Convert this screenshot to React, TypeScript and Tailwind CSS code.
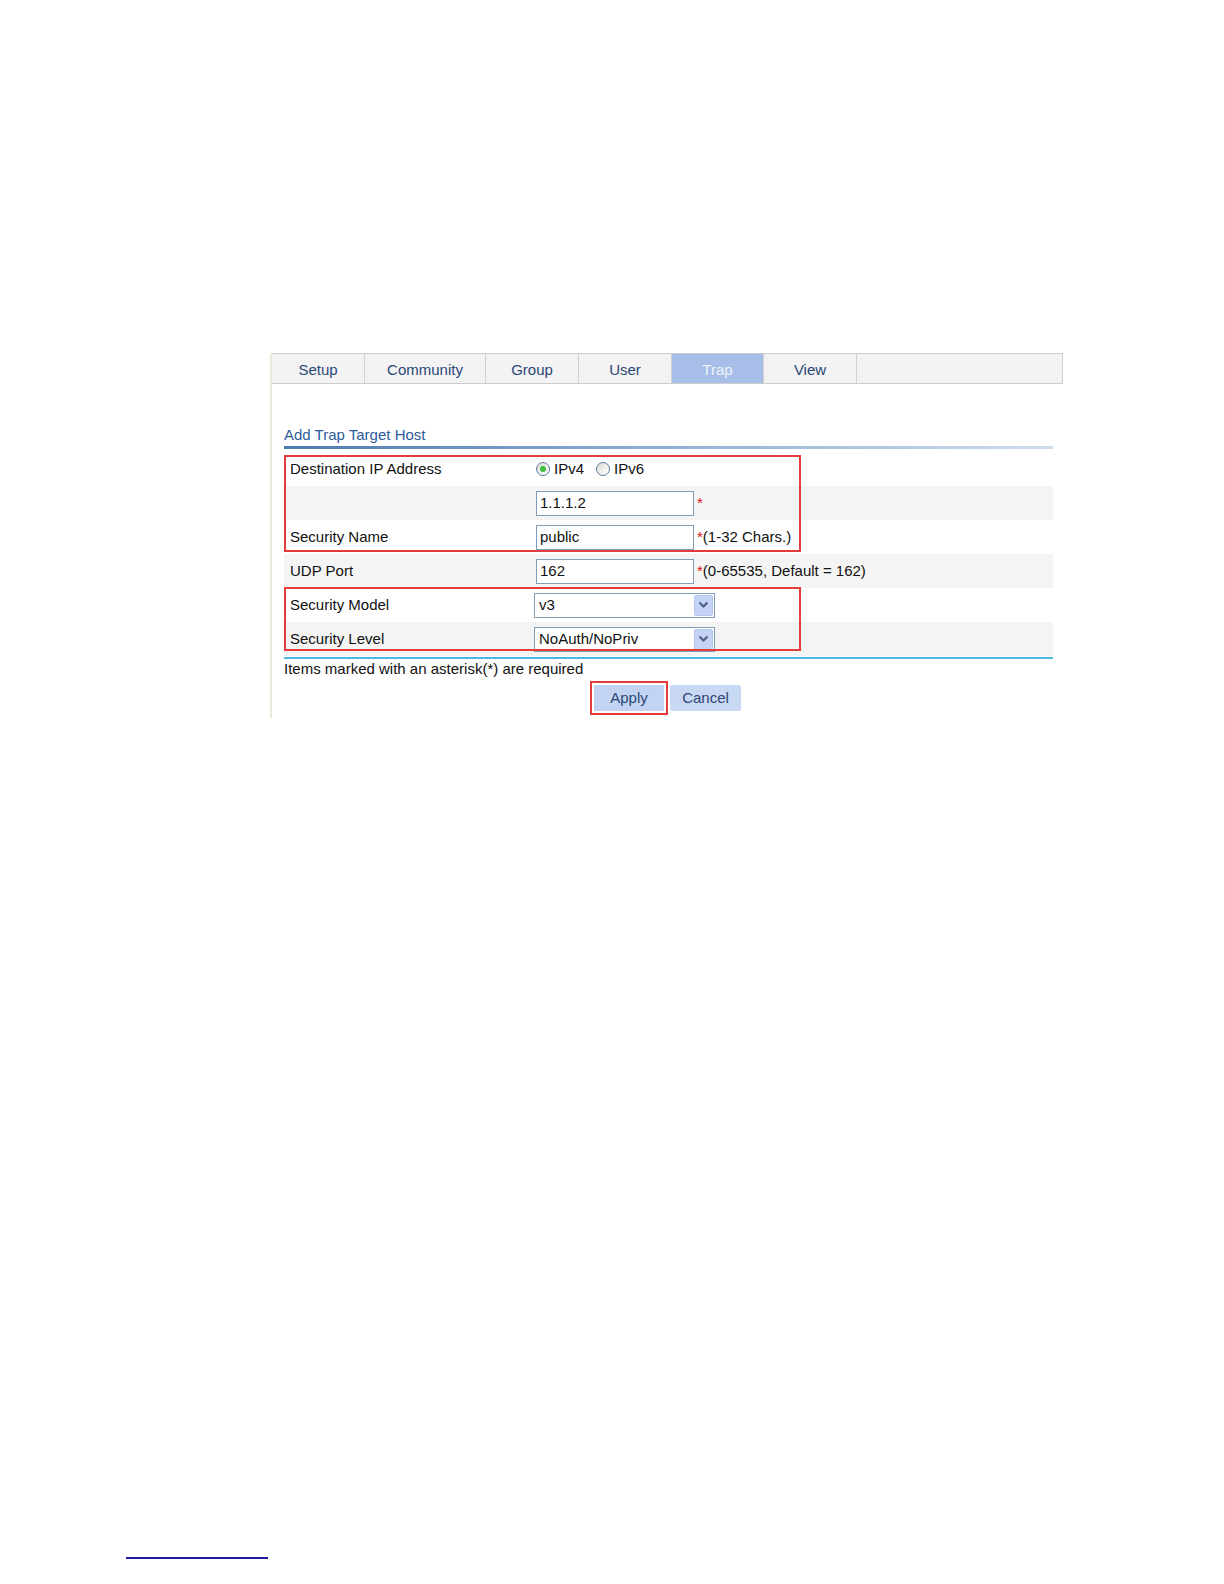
import { type ReactNode } from "react";

const tabs = ["Setup", "Community", "Group", "User", "Trap", "View"];
const tabWidths = ["w-[93px]", "w-[121px]", "w-[93px]", "w-[93px]", "w-[92px]", "w-[93px]"];

const Row = ({ label, shaded, children }: { label?: string; shaded?: boolean; children: ReactNode }) => (
  <div className={`flex h-[34px] items-center ${shaded ? "bg-[#f4f4f4]" : "bg-white"}`}>
    <div className="w-[252px] pl-[6px] text-[15px] text-[#111]">{label}</div>
    <div className="flex items-center">{children}</div>
  </div>
);

const TextBox = ({ value }: { value: string }) => (
  <div className="w-[158px] h-[25px] border border-[#7f9db9] bg-white pl-[3px] flex items-center text-[15px] text-[#111]">
    {value}
  </div>
);

const Select = ({ value }: { value: string }) => (
  <div className="w-[181px] h-[25px] border border-[#7f9db9] bg-white flex items-center justify-between pl-[4px] pr-[1px] text-[15px] text-[#111]">
    <span>{value}</span>
    <span className="w-[19px] h-[21px] rounded-[2px] bg-[#c5d4f6] border border-[#b4c6ee] flex items-center justify-center">
      <svg width="11" height="8" viewBox="0 0 11 8">
        <path d="M1.5 1.5 L5.5 5.5 L9.5 1.5" fill="none" stroke="#4d6185" strokeWidth="2.2" />
      </svg>
    </span>
  </div>
);

const Radio = ({ checked, label }: { checked?: boolean; label: string }) => (
  <span className="flex items-center mr-[12px]">
    <span className="w-[14px] h-[14px] rounded-full border border-[#5a7aa4] bg-gradient-to-br from-[#dcdcd4] to-white flex items-center justify-center">
      {checked && <span className="w-[6px] h-[6px] rounded-full bg-[#3fbf3f]" />}
    </span>
    <span className="ml-[4px] text-[15px] text-[#111]">{label}</span>
  </span>
);

const Hint = ({ text }: { text?: string }) => (
  <span className="ml-[3px] text-[15px] text-[#111]">
    <span className="text-[#e01010]">*</span>
    {text}
  </span>
);

export default function App() {
  return (
    <div className="w-[1224px] h-[1584px] bg-white overflow-hidden font-['Liberation_Sans',Arial,sans-serif]">
      <div className="ml-[270px] mt-[353px] w-[793px] h-[365px] border-l-2 border-[#ebe9dc] flex flex-col">
        {/* tab strip */}
        <div className="flex h-[31px] bg-[#f3f3f3] border-t border-r border-b border-[#cdcdcd]">
          {tabs.map((t, i) => (
            <div
              key={t}
              className={`${tabWidths[i]} border-r border-[#d2d2d2] flex items-center justify-center pt-[3px] text-[15px] ${
                t === "Trap" ? "bg-[#a7bfe8] text-[#eef3fb]" : "text-[#2b4777]"
              }`}
            >
              {t}
            </div>
          ))}
        </div>

        <div className="pl-[12px] pr-[10px]">
          <div className="mt-[42px] text-[15px] leading-[17px] text-[#2d5b9a]">Add Trap Target Host</div>
          <div className="mt-[3px] h-[3px] bg-gradient-to-r from-[#4d7bb4] via-[#8fb0d6] to-[#cfdcec]" />

          <div className="relative mt-[3px]">
            <Row label="Destination IP Address">
              <Radio checked label="IPv4" />
              <Radio label="IPv6" />
            </Row>
            <Row shaded>
              <TextBox value="1.1.1.2" />
              <Hint />
            </Row>
            <Row label="Security Name">
              <TextBox value="public" />
              <Hint text="(1-32 Chars.)" />
            </Row>
            <Row label="UDP Port" shaded>
              <TextBox value="162" />
              <Hint text="(0-65535, Default = 162)" />
            </Row>
            <Row label="Security Model">
              <div className="-ml-[2px]">
                <Select value="v3" />
              </div>
            </Row>
            <Row label="Security Level" shaded>
              <div className="-ml-[2px]">
                <Select value="NoAuth/NoPriv" />
              </div>
            </Row>

            {/* annotation boxes */}
            <div className="absolute left-0 top-[3px] w-[517px] h-[97px] border-2 border-[#e23c3c] pointer-events-none" />
            <div className="absolute left-0 top-[135px] w-[517px] h-[64px] border-2 border-[#e23c3c] pointer-events-none" />
          </div>

          <div className="mt-[1px] h-[2px] bg-[#52b6e2]" />
          <div className="mt-[2px] text-[15px] leading-[16px] text-[#111]">Items marked with an asterisk(*) are required</div>

          <div className="mt-[4px] flex items-center pl-[306px]">
            <div className="border-2 border-[#e23c3c] p-[2px]">
              <div className="w-[70px] h-[26px] bg-[#c3d4f2] flex items-center justify-center text-[15px] text-[#2b4777]">
                Apply
              </div>
            </div>
            <div className="ml-[2px] w-[71px] h-[26px] bg-[#c9d8f2] rounded-[2px] flex items-center justify-center text-[15px] text-[#2b4777]">
              Cancel
            </div>
          </div>
        </div>
      </div>

      <div className="ml-[126px] mt-[839px] w-[142px] h-[2px] bg-[#1c1c9c]" />
    </div>
  );
}
